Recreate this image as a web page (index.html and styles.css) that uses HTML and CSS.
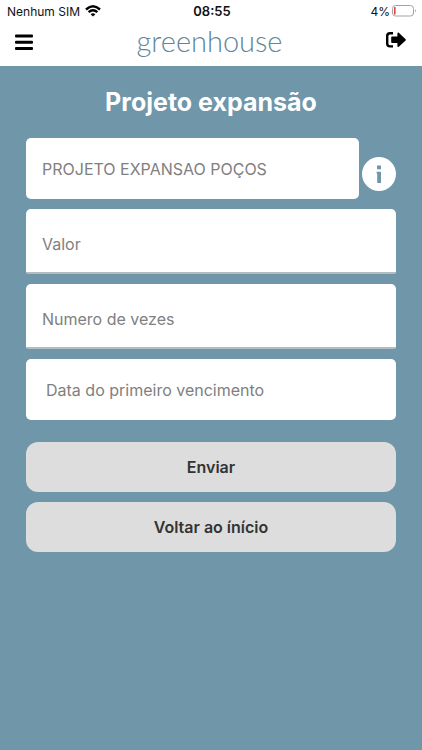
FILE: index.html
```
<!DOCTYPE html>
<html lang="pt-BR">
	<head>
		<title>Projeto expansão</title>
		<meta charset="UTF-8">
		<meta name="viewport" content="width=device-width, initial-scale=1.0">
		<link rel="stylesheet" href="styles.css">
	</head>
	<body>
		<div class="status-bar">
			<div class="carrier">
				<span>Nenhum SIM</span>
				<svg width="16" height="12" viewBox="0 0 16 12" fill="none" stroke="#000" stroke-width="2.4">
					<path d="M1 4.5 Q8 -1.8 15 4.5"/>
					<path d="M3.6 7.2 Q8 3.4 12.4 7.2"/>
					<path d="M8 11.6 L5.6 9.2 Q8 7.2 10.4 9.2 Z" fill="#000" stroke="none"/>
				</svg>
			</div>
			<span class="clock">08:55</span>
			<div class="battery">
				<span>4%</span>
				<svg width="25" height="12" viewBox="0 0 25 12">
					<rect x="0.5" y="0.5" width="21" height="10.5" rx="3" fill="#fff" stroke="#a3a3a3"/>
					<rect x="2" y="2" width="1.6" height="7.5" rx="0.6" fill="#e0404c"/>
					<path d="M23 4 Q24.6 5.8 23 7.6 Z" fill="#8a8a8a"/>
				</svg>
			</div>
		</div>

		<header>
			<button type="button" class="icon-button" aria-label="Menu">
				<svg width="20" height="18" viewBox="0 0 20 18">
					<rect x="1" y="0.4" width="18" height="3" rx="1"/>
					<rect x="1" y="6.7" width="18" height="3" rx="1"/>
					<rect x="1" y="13" width="18" height="3" rx="1"/>
				</svg>
			</button>
			<span class="logo">greenhouse</span>
			<button type="button" class="icon-button sair" aria-label="Sair">
				<svg width="22" height="18" viewBox="0 0 22 18">
					<path d="M8 2.2 H5 Q2.2 2.2 2.2 5 V12.6 Q2.2 15.4 5 15.4 H8" fill="none" stroke="#000" stroke-width="2.4"/>
					<path d="M6.2 6.4 Q6.2 5.6 7 5.6 H12.4 V2.4 Q12.6 1.2 13.8 1.8 L20.6 8.2 Q21.2 8.8 20.6 9.4 L13.8 15.8 Q12.6 16.4 12.4 15.2 V12 H7 Q6.2 12 6.2 11.2 Z"/>
				</svg>
			</button>
		</header>

		<main>
			<h1>Projeto expansão</h1>
			<form>
				<div class="projeto">
					<input type="text" class="campo" value="PROJETO EXPANSAO POÇOS" aria-label="Projeto" readonly>
					<button type="button" class="info" aria-label="Informações">
						<svg width="34" height="34" viewBox="0 0 34 34">
							<circle cx="17" cy="17" r="17" fill="#fff"/>
							<rect x="15" y="8.5" width="4" height="3.8"/>
							<path d="M14.6 14.8 H19 V26 H15.2 V16.6 H14.6 Z"/>
						</svg>
					</button>
				</div>
				<input type="text" class="campo linha" placeholder="Valor" aria-label="Valor">
				<input type="text" class="campo linha" placeholder="Numero de vezes" aria-label="Numero de vezes">
				<input type="text" class="campo data" placeholder="Data do primeiro vencimento" aria-label="Data do primeiro vencimento">

				<div class="botoes">
					<button type="submit" class="botao">Enviar</button>
					<button type="button" class="botao">Voltar ao ínício</button>
				</div>
			</form>
		</main>
	</body>
</html>
```
FILE: styles.css
```
* {
	box-sizing: border-box;
}
body {
	margin: 0;
	min-height: 100vh;
	display: flex;
	flex-direction: column;
	background: #7096aa;
	font-family: Inter, "Liberation Sans", sans-serif;
}
.status-bar {
	display: grid;
	grid-template-columns: 1fr auto 1fr;
	align-items: center;
	height: 22px;
	padding: 0 5px 0 7px;
	background: white;
	color: #111;
	font-size: 12px;
}
.carrier, .battery {
	display: flex;
	align-items: center;
	gap: 5px;
}
.battery {
	justify-content: flex-end;
	gap: 2px;
}
.clock {
	font-size: 13px;
	font-weight: 600;
}
header {
	display: flex;
	justify-content: space-between;
	align-items: center;
	height: 44px;
	padding: 0 15px 2px 14px;
	background: white;
}
.icon-button, .info {
	display: flex;
	padding: 0;
	border: none;
	background: none;
}
.sair {
	padding-bottom: 6px;
}
.logo {
	padding-bottom: 4px;
	font-family: Lato, sans-serif;
	font-size: 29px;
	font-weight: 300;
	line-height: 36px;
	color: #5f8799;
}
main {
	padding: 20px 26px;
}
h1 {
	margin: 0 0 20px;
	text-align: center;
	font-size: 25px;
	line-height: 32px;
	font-weight: 700;
	color: white;
}
form {
	display: flex;
	flex-direction: column;
	gap: 10px;
}
.projeto {
	display: flex;
	align-items: center;
	gap: 3px;
}
.campo {
	width: 100%;
	height: 61px;
	padding: 0 16px;
	border: none;
	border-radius: 5px;
	outline: none;
	background: white;
	color: #808080;
	font-family: inherit;
	font-size: 16px;
}
.campo::placeholder {
	color: #808080;
	opacity: 1;
}
.linha {
	height: 65px;
	padding-top: 6px;
	border-bottom: 2px solid #b5bcc0;
	border-radius: 5px 5px 2px 2px;
}
.data {
	padding: 0 20px;
}
.info {
	flex-shrink: 0;
	padding-top: 10px;
	fill: #7096aa;
}
.botoes {
	display: flex;
	flex-direction: column;
	gap: 10px;
	margin-top: 12px;
}
.botao {
	height: 50px;
	border: none;
	border-radius: 12px;
	background: #ddd;
	color: #333;
	font-family: inherit;
	font-size: 16px;
	font-weight: 600;
}
```
